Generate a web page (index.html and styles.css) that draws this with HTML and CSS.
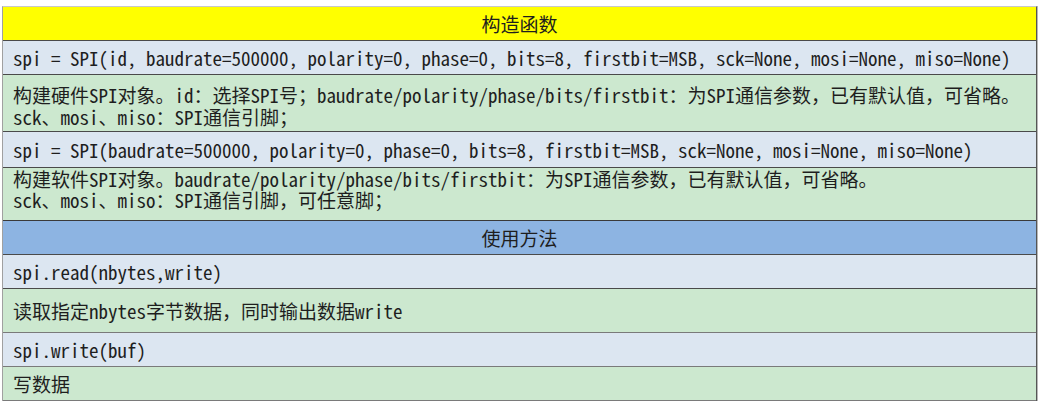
FILE: index.html
```html
<!DOCTYPE html>
<html lang="zh-CN">
<head>
<meta charset="utf-8">
<title>SPI</title>
<link rel="stylesheet" href="styles.css">
</head>
<body>
<div class="sheet">
  <div class="row head yellow r1">构造函数</div>
  <div class="row code r2">spi = SPI(id, baudrate=500000, polarity=0, phase=0, bits=8, firstbit=MSB, sck=None, mosi=None, miso=None)</div>
  <div class="row desc r3">构建硬件SPI对象。id：选择SPI号；baudrate/polarity/phase/bits/firstbit：为SPI通信参数，已有默认值，可省略。<br>sck、mosi、miso：SPI通信引脚；</div>
  <div class="row code r4">spi = SPI(baudrate=500000, polarity=0, phase=0, bits=8, firstbit=MSB, sck=None, mosi=None, miso=None)</div>
  <div class="row desc r5">构建软件SPI对象。baudrate/polarity/phase/bits/firstbit：为SPI通信参数，已有默认值，可省略。<br>sck、mosi、miso：SPI通信引脚，可任意脚；</div>
  <div class="row head blue r6">使用方法</div>
  <div class="row code r7">spi.read(nbytes,write)</div>
  <div class="row desc r8">读取指定nbytes字节数据，同时输出数据write</div>
  <div class="row code r9">spi.write(buf)</div>
  <div class="row desc r10">写数据</div>
</div>
</body>
</html>
```

FILE: styles.css
```css
html, body {
  margin: 0;
  padding: 0;
  background: #ffffff;
}

body {
  width: 1051px;
  height: 402px;
  overflow: hidden;
}

.sheet {
  margin: 6px 0 0 2px;
  width: 1033px;
  display: flex;
  flex-direction: column;
  border-top: 1px solid #c8c8c8;
  border-left: 1px solid #a0a0a0;
  border-right: 1px solid #555555;
  box-shadow: 1px 0 0 #b8b8b8;
  font-family: "Noto Sans Mono CJK SC", "Noto Sans CJK SC", monospace;
  font-size: 19px;
  color: #1e1e1e;
}

.row {
  box-sizing: border-box;
  border-bottom: 1px solid #4a4a4a;
  padding: 0 0 0 10px;
  display: flex;
  flex-direction: column;
  justify-content: center;
  white-space: nowrap;
  line-height: 22px;
}

.head {
  align-items: center;
  padding-left: 0;
}

.yellow { background: #ffff00; }
.blue { background: #8db4e2; }
.code { background: #dce6f1; }
.desc { background: #cce8cf; display: block; padding-top: 6px; }

.r1 { height: 34px; }
.r2 { height: 34px; }
.r3 { height: 57px; padding-top: 9px; line-height: 22px; }
.r4 { height: 36px; }
.r5 { height: 53px; padding-top: 0; line-height: 21px; border-bottom-color: #3a3a3a; }
.r6 { height: 34px; }
.r7 { height: 34px; }
.r8 { height: 44px; padding-top: 11px; border-bottom-color: #7a7a7a; }
.r9 { height: 34px; border-bottom-color: #7a7a7a; }
.r10 { height: 34px; padding-top: 6px; border-bottom-color: #7a7a7a; }
```
